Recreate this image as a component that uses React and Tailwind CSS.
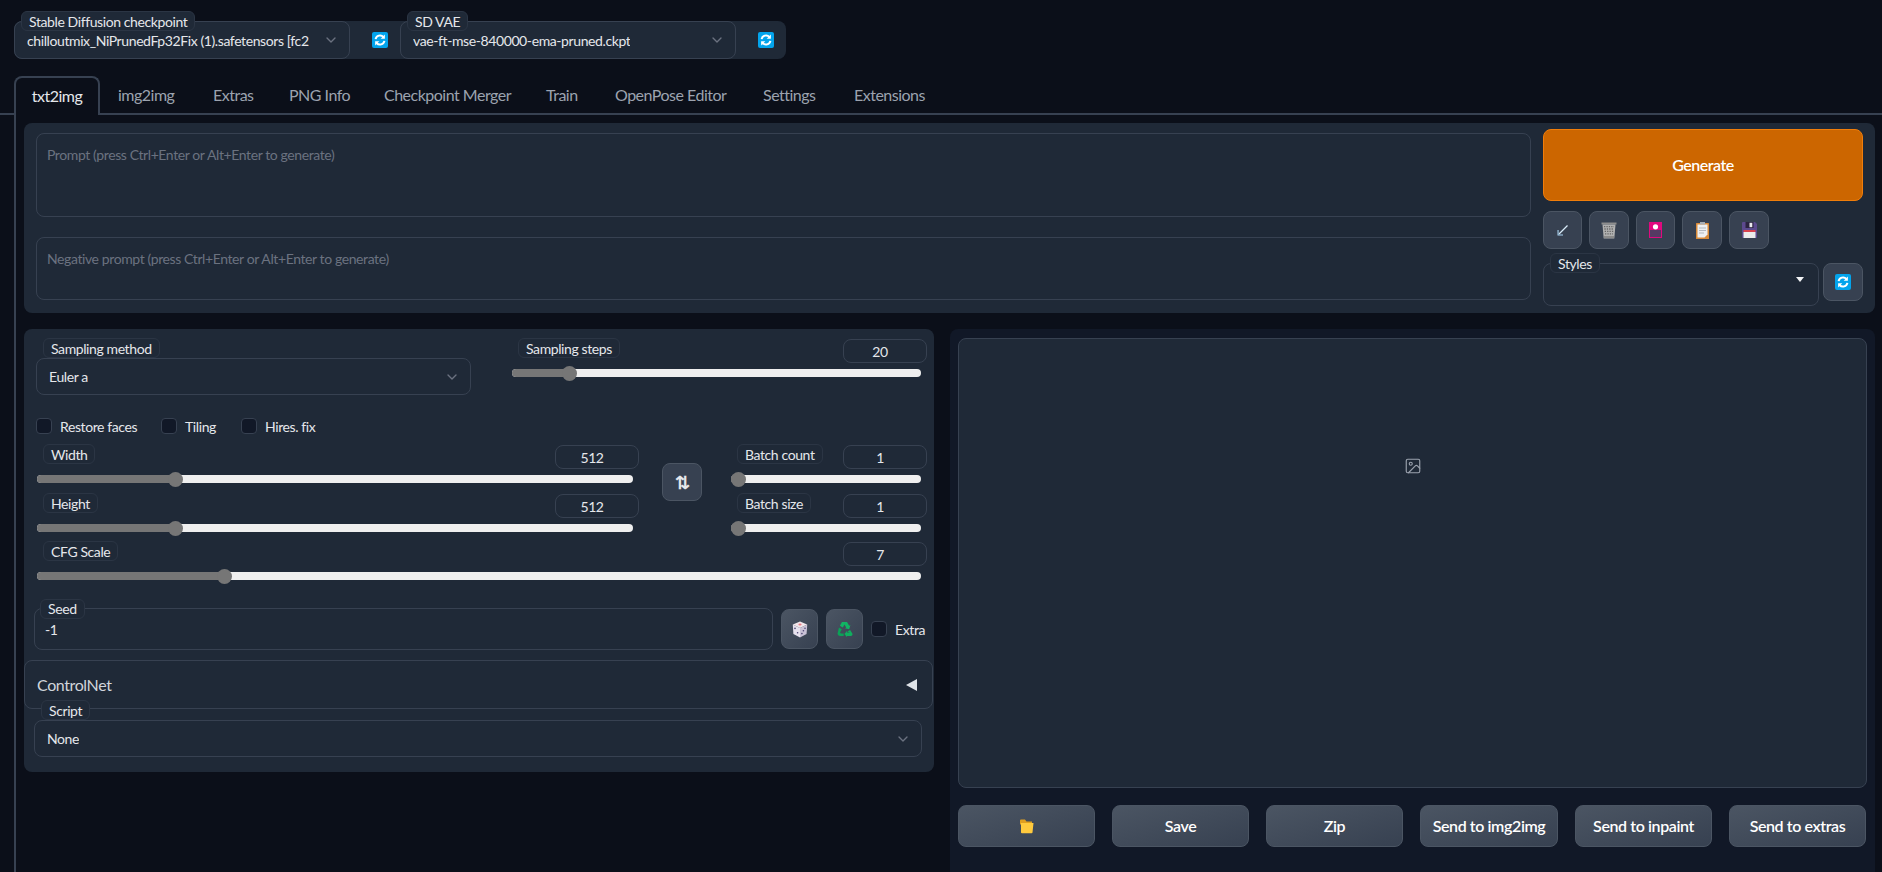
import { ChevronDown, Image as ImageIcon } from "lucide-react";

const TABS = [
  { label: "img2img", w: "w-[95px]" },
  { label: "Extras", w: "w-[76px]" },
  { label: "PNG Info", w: "w-[95px]" },
  { label: "Checkpoint Merger", w: "w-[162px]" },
  { label: "Train", w: "w-[69px]" },
  { label: "OpenPose Editor", w: "w-[148px]" },
  { label: "Settings", w: "w-[91px]" },
  { label: "Extensions", w: "w-[100px]" },
];

const RefreshIcon = () => (
  <svg width="16" height="16" viewBox="0 0 16 16">
    <rect width="16" height="16" rx="2" fill="#03a4ec" />
    <path d="M3.6 7.2A4.5 4.5 0 0 1 11.4 5" fill="none" stroke="#fff" strokeWidth="2" />
    <path d="M12.9 2.6v4.2H8.7z" fill="#fff" />
    <path d="M12.4 8.8A4.5 4.5 0 0 1 4.6 11" fill="none" stroke="#fff" strokeWidth="2" />
    <path d="M3.1 13.4V9.2h4.2z" fill="#fff" />
  </svg>
);

const ArrowIcon = () => (
  <svg width="11" height="11" viewBox="0 0 11 11">
    <path d="M10.5 0.5 2 9" stroke="#d9ecf9" strokeWidth="1.2" />
    <path d="M0.5 5V10.5H6V9.4H1.6V5z" fill="#a9d2f0" />
  </svg>
);

const TrashIcon = () => (
  <svg width="16" height="17" viewBox="0 0 16 17">
    <path d="M0.5 0.5h15v2h-15z" fill="#8d8d8d" />
    <path d="M1.5 2.5h13l-1.2 14H2.7z" fill="#b0b0b0" />
    <path d="M3 4.6h10M3.4 7h9.2M3.7 9.4h8.6M4 11.8h8" stroke="#676767" strokeWidth="1.3" strokeDasharray="1.3 1.1" />
    <path d="M3 15h10" stroke="#8a8a8a" strokeWidth="2" />
  </svg>
);

const CardIcon = () => (
  <svg width="13" height="16" viewBox="0 0 13 16">
    <rect width="13" height="16" fill="#e0097f" />
    <rect x="1" y="8" width="11" height="7" fill="#553a63" />
    <circle cx="6.5" cy="4.8" r="2.6" fill="#fff" />
  </svg>
);

const ClipboardIcon = () => (
  <svg width="13" height="17" viewBox="0 0 13 17">
    <rect y="1" width="13" height="16" rx="0.5" fill="#d98b3a" />
    <path d="M1.5 2.5h10v10l-3 3h-7z" fill="#eef0f2" />
    <path d="M3 6h7M3 8.5h7M3 11h5" stroke="#b4b9bf" strokeWidth="1" />
    <rect x="4" y="0" width="5" height="2.5" fill="#a8adb3" />
  </svg>
);

const FloppyIcon = () => (
  <svg width="15" height="16" viewBox="0 0 15 16">
    <path d="M0 1a1 1 0 0 1 1-1h12l2 2v13a1 1 0 0 1-1 1H1a1 1 0 0 1-1-1z" fill="#5c4a8e" />
    <rect x="3.5" y="0" width="8" height="6" fill="#2c2440" />
    <rect x="7.5" y="0.8" width="2.8" height="4.4" fill="#ebe9ee" />
    <rect x="1.5" y="8" width="12" height="2" fill="#d9434e" />
    <rect x="1.5" y="10" width="12" height="6" fill="#ececec" />
  </svg>
);

const DiceIcon = () => (
  <svg width="16" height="17" viewBox="0 0 16 17">
    <path d="M8 0.5 15.2 3.6 8 7 0.8 3.6z" fill="#f1e6ea" />
    <path d="M0.8 3.6 8 7v9.5L1.4 13z" fill="#e7e2ee" />
    <path d="M15.2 3.6 8 7v9.5L14.6 13z" fill="#c9c2d6" />
    <ellipse cx="8" cy="3.5" rx="1.6" ry="0.9" fill="#ea7a85" />
    <circle cx="3" cy="7.4" r="0.8" fill="#4a4270" />
    <circle cx="5.6" cy="11.8" r="0.8" fill="#4a4270" />
    <circle cx="13" cy="7.2" r="0.8" fill="#4a4270" />
    <circle cx="11.4" cy="9.8" r="0.8" fill="#4a4270" />
    <circle cx="9.9" cy="12.6" r="0.8" fill="#4a4270" />
  </svg>
);

const RecycleIcon = () => (
  <svg width="16" height="16" viewBox="0 0 16 16">
    <path d="M5 1h5l2.2 3.8 1.2-.7-1.2 4.2-4.2-1.1 1.2-.7L7.5 3.5 5.8 6.4 2.9 4.7z" fill="#11b463" />
    <path d="M1.9 6.6 4.8 8.3 3.3 11a1 1 0 0 0 .9 1.5h2.5V15H3.2A2.6 2.6 0 0 1 .9 11.2z" fill="#0ba257" />
    <path d="M13.1 8.9 15.3 12.6A1.7 1.7 0 0 1 13.8 15H10v1.2L7.4 13 10 10v1.5h2.9l-2.6-1z" fill="#0fae5e" />
  </svg>
);

const FolderIcon = () => (
  <svg width="16" height="16" viewBox="0 0 16 16">
    <path d="M1 2.5a1 1 0 0 1 1-1h4l1.5 2H13v3H1z" fill="#e09f20" />
    <path d="M2 5h12.5l-1 9.5a1 1 0 0 1-1 .8H3a1 1 0 0 1-1-.8z" fill="#ffca3e" />
  </svg>
);

const FloatLabel = ({ className, children }) => (
  <span className={`absolute flex h-[20px] items-center whitespace-nowrap rounded-md border border-[#2b3544] bg-[#1f2937] px-[7px] text-[14px] text-[#e5e7eb] ${className}`}>
    {children}
  </span>
);

const SelectBox = ({ value, className = "" }) => (
  <div className={`flex h-[37px] items-center justify-between rounded-lg border border-[#374151] bg-[#1f2937] pl-[12px] pr-[10px] text-[14px] text-[#e5e7eb] ${className}`}>
    <span className="overflow-hidden whitespace-nowrap">{value}</span>
    <ChevronDown size={16} strokeWidth={2} className="shrink-0 text-[#6b7280]" />
  </div>
);

const Checkbox = ({ label, className = "" }) => (
  <label className={`flex items-center gap-[8px] text-[14px] text-[#e5e7eb] ${className}`}>
    <span className="h-[16px] w-[16px] rounded border border-[#374151] bg-[#111827]" />
    {label}
  </label>
);

function Slider({ label, value, min, max, className = "" }) {
  const ratio = (value - min) / (max - min);
  return (
    <div className={`h-[39px] shrink-0 ${className}`}>
      <div className="flex h-[24px] items-start justify-between pl-[7px]">
        <span className="flex h-[20px] items-center rounded-md border border-[#2b3544] px-[7px] text-[14px] text-[#e5e7eb]">
          {label}
        </span>
        <span className="mt-[1px] flex h-[24px] w-[84px] items-center justify-center rounded-lg border border-[#374151] pr-[10px] text-[14px] text-[#e5e7eb]">
          {value}
        </span>
      </div>
      <div className="relative ml-[1px] mr-[6px] mt-[7px] h-[8px] rounded-full bg-[#efefef]">
        <div
          className="absolute inset-y-0 left-0 rounded-full bg-[#767676]"
          style={{ width: `calc(${ratio} * (100% - 15px) + 7px)` }}
        />
        <div
          className="absolute top-[-3.5px] h-[15px] w-[15px] rounded-full bg-[#767676]"
          style={{ left: `calc(${ratio} * (100% - 15px))` }}
        />
      </div>
    </div>
  );
}

const ToolButton = ({ children, className = "" }) => (
  <button className={`flex h-[38px] items-center justify-center rounded-lg border border-[#4b5563] bg-[#374151] ${className}`}>
    {children}
  </button>
);

const GradButton = ({ children, className = "" }) => (
  <button className={`flex items-center justify-center rounded-lg border border-[#4b5563] bg-gradient-to-br from-[#4b5563] to-[#374151] text-[16px] font-semibold tracking-[-0.4px] text-white ${className}`}>
    {children}
  </button>
);

export default function App() {
  return (
    <div className="h-[872px] overflow-hidden bg-[#0b0f19] font-['Lato','Liberation_Sans',sans-serif] tracking-[-0.4px]">
      {/* checkpoint + vae */}
      <div className="ml-[14px] w-[772px] pt-[21px]">
        <div className="flex h-[38px] rounded-lg bg-[#1f2937]">
          <div className="relative w-[336px]">
            <FloatLabel className="left-[7px] top-[-10px]">Stable Diffusion checkpoint</FloatLabel>
            <div className="flex h-[38px] items-center justify-between rounded-lg border border-[#374151] pl-[12px] pr-[10px] text-[14px] text-[#e5e7eb]">
              <span className="w-[283px] overflow-hidden whitespace-nowrap">chilloutmix_NiPrunedFp32Fix (1).safetensors [fc2</span>
              <ChevronDown size={16} className="shrink-0 text-[#6b7280]" />
            </div>
          </div>
          <div className="flex w-[50px] items-center pl-[22px]"><RefreshIcon /></div>
          <div className="relative w-[336px]">
            <FloatLabel className="left-[7px] top-[-10px]">SD VAE</FloatLabel>
            <div className="flex h-[38px] items-center justify-between rounded-lg border border-[#374151] pl-[12px] pr-[10px] text-[14px] text-[#e5e7eb]">
              <span className="overflow-hidden whitespace-nowrap">vae-ft-mse-840000-ema-pruned.ckpt</span>
              <ChevronDown size={16} className="shrink-0 text-[#6b7280]" />
            </div>
          </div>
          <div className="flex w-[50px] items-center pl-[22px]"><RefreshIcon /></div>
        </div>
      </div>

      {/* tabs */}
      <div className="mt-[17px] flex h-[39px] border-b-2 border-[#374151] pl-[14px] tracking-[-0.5px]">
        <div className="flex h-[39px] w-[86px] items-center justify-center rounded-t-lg border-2 border-b-0 border-[#374151] bg-[#0b0f19] pb-[2px] text-[16px] text-[#e5e7eb]">
          txt2img
        </div>
        {TABS.map((t) => (
          <div key={t.label} className={`flex items-center whitespace-nowrap pl-[18px] text-[16px] text-[#9ca3af] ${t.w}`}>
            {t.label}
          </div>
        ))}
      </div>

      <div className="ml-[14px] mr-[7px] h-full border-l-2 border-[#374151] pl-[8px] pt-[8px]">
        {/* prompt panel */}
        <div className="flex h-[190px] gap-[12px] rounded-lg bg-[#1f2937] px-[12px]">
          <div className="w-[1495px] pt-[10px]">
            <div className="h-[84px] rounded-lg border border-[#374151] px-[10px] py-[11px] text-[14px] leading-[20px] text-[#6b7280]">
              Prompt (press Ctrl+Enter or Alt+Enter to generate)
            </div>
            <div className="mt-[20px] h-[63px] rounded-lg border border-[#374151] px-[10px] py-[11px] text-[14px] leading-[20px] text-[#6b7280]">
              Negative prompt (press Ctrl+Enter or Alt+Enter to generate)
            </div>
          </div>
          <div className="w-[320px] pt-[6px]">
            <button className="flex h-[72px] w-full items-center justify-center rounded-lg border border-[#f07d0a] bg-[#cc6600] text-[16px] font-semibold tracking-[-0.5px] text-white">
              Generate
            </button>
            <div className="mt-[10px] flex gap-[7px]">
              <ToolButton className="w-[39px]"><ArrowIcon /></ToolButton>
              <ToolButton className="w-[40px]"><TrashIcon /></ToolButton>
              <ToolButton className="w-[39px]"><CardIcon /></ToolButton>
              <ToolButton className="w-[40px]"><ClipboardIcon /></ToolButton>
              <ToolButton className="w-[40px]"><FloppyIcon /></ToolButton>
            </div>
            <div className="mt-[14px] flex gap-[4px]">
              <div className="relative h-[43px] w-[276px] rounded-lg border border-[#374151]">
                <FloatLabel className="left-[6px] top-[-11px]">Styles</FloatLabel>
                <svg width="8" height="5" viewBox="0 0 8 5" className="absolute right-[14px] top-[13px]">
                  <path d="M0 0h8L4 5z" fill="#f3f4f6" />
                </svg>
              </div>
              <ToolButton className="w-[40px]"><RefreshIcon /></ToolButton>
            </div>
          </div>
        </div>

        <div className="mt-[16px] flex items-start gap-[16px]">
          {/* left column */}
          <div className="h-[443px] w-[910px] rounded-lg bg-[#1f2937] pl-[12px] pr-[7px] pt-[9px]">
            <div className="flex">
              <div className="relative w-[435px] pt-[20px]">
                <FloatLabel className="left-[7px] top-0">Sampling method</FloatLabel>
                <SelectBox value="Euler a" />
              </div>
              <Slider label="Sampling steps" value={20} min={1} max={150} className="ml-[40px] w-[416px]" />
            </div>

            <div className="mt-[23px] flex h-[16px] items-center">
              <Checkbox label="Restore faces" className="w-[125px]" />
              <Checkbox label="Tiling" className="w-[80px]" />
              <Checkbox label="Hires. fix" />
            </div>

            <div className="mt-[10px] flex">
              <div className="w-[603px] shrink-0">
                <Slider label="Width" value={512} min={64} max={2048} />
                <Slider label="Height" value={512} min={64} max={2048} className="mt-[10px]" />
              </div>
              <div className="ml-[23px] w-[40px] shrink-0 pt-[19px]">
                <ToolButton className="w-[40px] text-[18px] font-bold text-[#e5e7eb]">⇅</ToolButton>
              </div>
              <div className="ml-[28px] w-[197px] shrink-0">
                <Slider label="Batch count" value={1} min={1} max={100} />
                <Slider label="Batch size" value={1} min={1} max={100} className="mt-[10px]" />
              </div>
            </div>

            <Slider label="CFG Scale" value={7} min={1} max={30} className="mt-[9px] w-[891px]" />

            <div className="-ml-[2px] mt-[28px] flex items-center">
              <div className="relative h-[42px] w-[739px] rounded-lg border border-[#374151] px-[10px] pt-[11px] text-[14px] leading-[20px] text-[#e5e7eb]">
                <FloatLabel className="left-[5px] top-[-10px]">Seed</FloatLabel>
                -1
              </div>
              <GradButton className="ml-[8px] h-[40px] w-[37px]"><DiceIcon /></GradButton>
              <GradButton className="ml-[8px] h-[40px] w-[37px]"><RecycleIcon /></GradButton>
              <Checkbox label="Extra" className="ml-[8px]" />
            </div>

            <div className="-ml-[12px] mt-[10px] flex h-[49px] w-[909px] items-center justify-between rounded-lg border border-[#374151] pl-[12px] pr-[15px] text-[16px] text-[#d1d5db]">
              ControlNet
              <svg width="11" height="12" viewBox="0 0 11 12"><path d="M11 0v12L0 6z" fill="#dfe3e8" /></svg>
            </div>

            <div className="relative -ml-[2px] mt-[11px] w-[888px]">
              <FloatLabel className="left-[7px] top-[-20px]">Script</FloatLabel>
              <SelectBox value="None" />
            </div>
          </div>

          {/* result column */}
          <div className="h-[600px] w-[925px] rounded-lg bg-[#111827] px-[8px] pt-[9px]">
            <div className="flex h-[450px] items-center justify-center rounded-lg border border-[#374151] bg-[#1f2937] pb-[194px]">
              <ImageIcon size={18} strokeWidth={1.5} className="text-[#9ca3af]" />
            </div>
            <div className="mt-[17px] flex gap-[17px]">
              <GradButton className="h-[42px] w-[137px]"><FolderIcon /></GradButton>
              <GradButton className="h-[42px] w-[137px]">Save</GradButton>
              <GradButton className="h-[42px] w-[137px]">Zip</GradButton>
              <GradButton className="h-[42px] w-[138px]">Send to img2img</GradButton>
              <GradButton className="h-[42px] w-[137px]">Send to inpaint</GradButton>
              <GradButton className="h-[42px] w-[137px]">Send to extras</GradButton>
            </div>
          </div>
        </div>
      </div>
    </div>
  );
}
